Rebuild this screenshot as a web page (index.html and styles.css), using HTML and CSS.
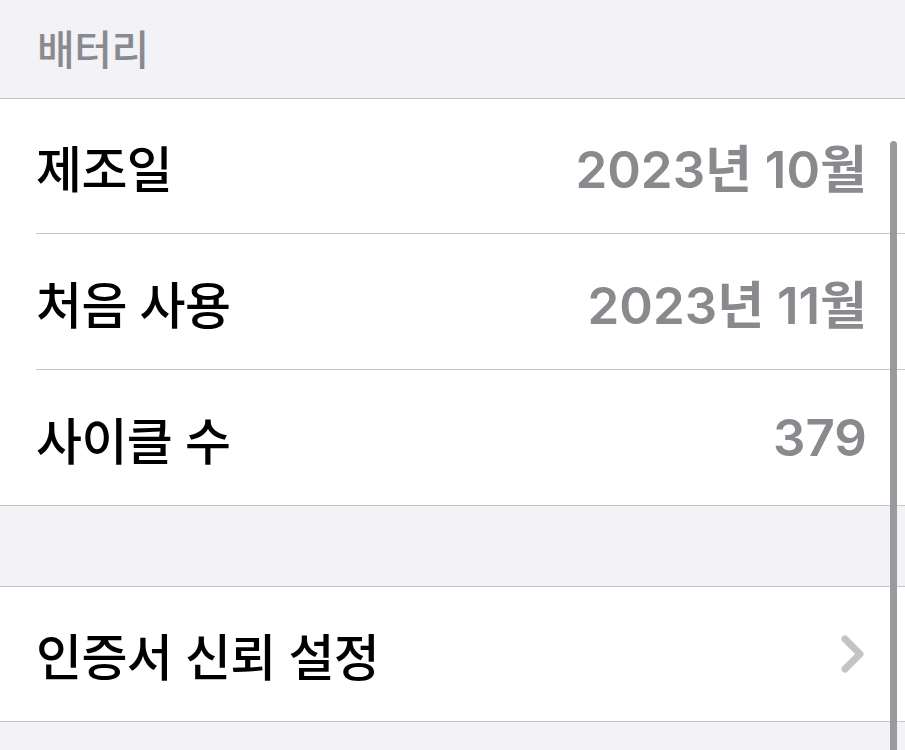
FILE: index.html
```html
<!DOCTYPE html>
<html lang="ko">
<head>
<meta charset="utf-8">
<link rel="stylesheet" href="styles.css">
</head>
<body>
<div class="screen">
  <div class="section-header">배터리</div>
  <div class="group">
    <div class="row r1"><span class="label">제조일</span><span class="value">2023년 10월</span></div>
    <div class="row r2"><span class="label">처음 사용</span><span class="value">2023년 11월</span></div>
    <div class="row r3"><span class="label">사이클 수</span><span class="value">379</span></div>
  </div>
  <div class="spacer"></div>
  <div class="group">
    <div class="row r4"><span class="label">인증서 신뢰 설정</span>
      <svg class="chevron" width="26" height="40" viewBox="0 0 26 40"><path d="M5 5 L20 20 L5 35" fill="none" stroke="#c4c4c7" stroke-width="7" stroke-linecap="round" stroke-linejoin="round"/></svg>
    </div>
  </div>
  <div class="tail"></div>
  <div class="scrollbar"></div>
</div>
</body>
</html>
```
FILE: styles.css
```css
html, body { margin: 0; padding: 0; }
body {
  background: #f2f2f7;
  font-family: Inter, "Noto Sans CJK KR", sans-serif;
  width: 905px;
  height: 750px;
  overflow: hidden;
}
.screen { position: relative; height: 750px; }
.section-header {
  height: 99px;
  box-sizing: border-box;
  padding: 22px 0 0 37px;
  font-size: 41px;
  font-weight: 500;
  color: #8a8a8e;
  line-height: 56px;
  letter-spacing: -0.5px;
  border-bottom: 1px solid #c6c6c8;
}
.group { background: #fff; border-bottom: 1px solid #c6c6c8; }
.row {
  margin-left: 36px;
  padding-right: 38px;
  display: flex;
  align-items: center;
  justify-content: space-between;
  box-sizing: border-box;
}
.r1 { height: 135px; border-bottom: 1px solid #c6c6c8; }
.r2 { height: 136px; border-bottom: 1px solid #c6c6c8; }
.r3 { height: 135px; }
.r4 { height: 134px; padding-right: 39px; }
.label { font-size: 50px; font-weight: 500; color: #000; letter-spacing: -0.6px; }
.value { font-size: 51px; font-weight: 600; color: #8a8a8e; letter-spacing: 0; }
.spacer { height: 81px; box-sizing: border-box; border-bottom: 1px solid #c6c6c8; }
.tail { height: 40px; }
.scrollbar {
  position: absolute;
  left: 890px;
  top: 141px;
  width: 7px;
  height: 620px;
  border-radius: 4px;
  background: #9a9a9e;
}
```
